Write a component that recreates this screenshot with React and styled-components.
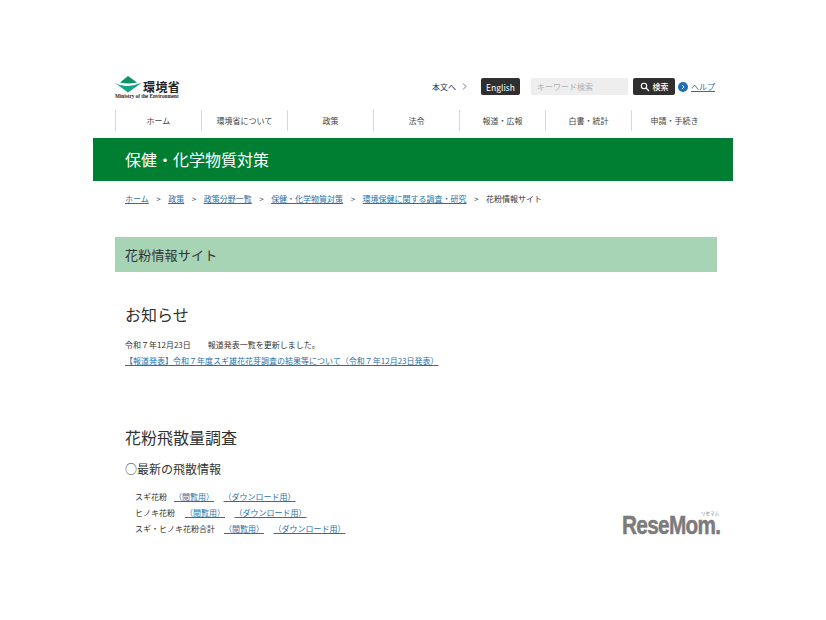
import React from "react";
import styled, { createGlobalStyle } from "styled-components";

const Global = createGlobalStyle`
  html, body { margin: 0; padding: 0; background: #fff; }
  body { font-family: "Noto Sans CJK JP", "Noto Sans", sans-serif; color: #333; }
  a { color: #2a6fa8; }
`;
const Page = styled.div`
  position: relative;
  width: 826px;
  height: 620px;
  overflow: hidden;
  padding: 75px 93px 0;
  box-sizing: border-box;
`;
const Header = styled.header`
  display: flex;
  justify-content: space-between;
  align-items: flex-start;
  padding: 0 18px 0 22px;
  height: 35px;
`;
const Logo = styled.div`
  display: flex;
  flex-direction: column;
  width: 66px;
`;
const LogoTop = styled.div`
  display: flex;
  align-items: center;
  gap: 1px;
  height: 18px;
`;
const LogoName = styled.span`
  font-size: 12px;
  font-weight: 700;
  line-height: 14px;
  letter-spacing: 0.4px;
  color: #222;
  margin-top: 5px;
`;
const LogoEn = styled.span`
  font-family: "Liberation Serif", serif;
  font-size: 5.2px;
  font-weight: 700;
  line-height: 6px;
  white-space: nowrap;
  color: #222;
`;
const Tools = styled.div`
  display: flex;
  align-items: center;
  height: 17px;
  margin-top: 3px;
`;
const SkipLink = styled.span`
  font-size: 8px;
  color: #333;
  display: flex;
  align-items: center;
  gap: 6px;
  margin-right: 14px;
`;
const DarkButton = styled.span`
  display: flex;
  align-items: center;
  justify-content: center;
  gap: 3px;
  height: 17px;
  width: ${(p) => p.$w}px;
  background: #2f2f2f;
  color: #fff;
  border-radius: 2px;
  font-size: ${(p) => p.$fs}px;
  font-weight: ${(p) => p.$fw || 400};
`;
const SearchBox = styled.span`
  display: flex;
  align-items: center;
  width: 97px;
  height: 17px;
  box-sizing: border-box;
  padding-left: 6px;
  margin: 0 5px 0 11px;
  background: #eeeeee;
  color: #b0b0b0;
  font-size: 8px;
`;
const Help = styled.span`
  display: flex;
  align-items: center;
  gap: 3px;
  margin-left: 3px;
  font-size: 8px;
  color: #2a6fa8;
  text-decoration: underline;
`;
const HelpDot = styled.span`
  display: flex;
  width: 10px;
  height: 10px;
  border-radius: 50%;
  background: #1d6fb8;
  align-items: center;
  justify-content: center;
`;
const Nav = styled.nav`
  display: flex;
  margin-left: 22px;
  height: 21px;
`;
const NavItem = styled.span`
  width: 86px;
  display: flex;
  align-items: center;
  justify-content: center;
  font-size: 8px;
  color: #444;
  border-left: 1px solid #d8d8d8;
  box-sizing: border-box;
`;
const GreenBand = styled.div`
  margin-top: 7px;
  height: 43px;
  box-sizing: border-box;
  padding: 0 0 2px 32px;
  background: #007f33;
  color: #fff;
  display: flex;
  align-items: center;
  font-size: 16px;
  font-weight: 400;
`;
const Crumbs = styled.div`
  display: flex;
  align-items: center;
  gap: 7.5px;
  height: 14px;
  margin-top: 10px;
  padding-left: 32px;
  font-size: 8px;
  color: #333;
`;
const Crumb = styled.a`
  text-decoration: underline;
`;
const Main = styled.main`
  padding: 0 16px 0 22px;
`;
const Title = styled.h1`
  margin: 32px 0 0;
  height: 35px;
  background: #a6d4b5;
  display: flex;
  align-items: center;
  padding-left: 10px;
  font-size: 13px;
  font-weight: 400;
  letter-spacing: 0.2px;
  color: #333;
`;
const H2 = styled.h2`
  margin: ${(p) => p.$mt}px 0 0 10px;
  font-size: 16px;
  line-height: 22px;
  font-weight: 400;
  color: #333;
`;
const Notice = styled.p`
  margin: 12px 0 0 10px;
  font-size: 8px;
  line-height: 16px;
  color: #333;
`;
const Gap = styled.span`
  display: inline-block;
  width: 17px;
`;
const NoticeLink = styled.a`
  display: block;
  text-decoration: underline;
  white-space: nowrap;
`;
const H3 = styled.h3`
  margin: 11px 0 0 10px;
  font-size: 12px;
  line-height: 20px;
  font-weight: 400;
  color: #333;
`;
const List = styled.ul`
  list-style: none;
  margin: 10px 0 0 20px;
  padding: 0;
  font-size: 8px;
  line-height: 16px;
  color: #333;
`;
const Row = styled.li`
  display: flex;
  gap: 9.5px;
  white-space: nowrap;
`;
const RowLabel = styled.span`
  margin-right: ${(p) => p.$trim}px;
`;
const RowLink = styled.a`
  text-decoration: underline;
`;
const Mark = styled.div`
  position: absolute;
  left: 622px;
  top: 516px;
  color: #7b7b7b;
  font-family: "Liberation Sans", sans-serif;
  font-weight: 700;
  font-size: 25px;
  line-height: 19px;
  letter-spacing: -0.8px;
  -webkit-text-stroke: 0.5px #7b7b7b;
  transform: scaleX(0.83);
  transform-origin: left;
  white-space: nowrap;
`;
const MarkKana = styled.span`
  position: absolute;
  left: 701px;
  top: 510px;
  color: #7b7b7b;
  font-size: 4.5px;
  line-height: 6px;
`;

const navItems = ["ホーム", "環境省について", "政策", "法令", "報道・広報", "白書・統計", "申請・手続き"];
const rows = [
  ["スギ花粉", -2.5],
  ["ヒノキ花粉", 0.5],
  ["スギ・ヒノキ花粉合計", -0.5],
];

export default function App() {
  return (
    <Page>
      <Global />
      <Header>
        <Logo>
          <LogoTop>
            <svg width="27" height="18" viewBox="0 0 27 18">
              <path d="M13 1 L22 7.5 Q13 9.5 5 7.5 Z" fill="#0a9468" />
              <path d="M0 8 Q6 11.5 13 11 Q20 10.5 27 7.5 Q21 12 13 17.5 Q7 13 0 8 Z" fill="#14a487" />
            </svg>
            <LogoName>環境省</LogoName>
          </LogoTop>
          <LogoEn>Ministry of the Environment</LogoEn>
        </Logo>
        <Tools>
          <SkipLink>
            本文へ
            <svg width="5" height="7" viewBox="0 0 5 7">
              <path d="M1 0.5 L4 3.5 L1 6.5" fill="none" stroke="#555" strokeWidth="0.8" />
            </svg>
          </SkipLink>
          <DarkButton $w={39} $fs={8.5}>English</DarkButton>
          <SearchBox>キーワード検索</SearchBox>
          <DarkButton $w={42} $fs={8} $fw={500}>
            <svg width="10" height="10" viewBox="0 0 10 10">
              <circle cx="4" cy="4" r="2.7" fill="none" stroke="#fff" strokeWidth="1.1" />
              <path d="M6 6 L9 9" stroke="#fff" strokeWidth="1.2" />
            </svg>
            検索
          </DarkButton>
          <Help>
            <HelpDot>
              <svg width="6" height="6" viewBox="0 0 6 6">
                <path d="M2 1 L4 3 L2 5" fill="none" stroke="#fff" strokeWidth="1" />
              </svg>
            </HelpDot>
            ヘルプ
          </Help>
        </Tools>
      </Header>
      <Nav>
        {navItems.map((n) => (
          <NavItem key={n}>{n}</NavItem>
        ))}
      </Nav>
      <GreenBand>保健・化学物質対策</GreenBand>
      <Crumbs>
        <Crumb>ホーム</Crumb>&gt;
        <Crumb>政策</Crumb>&gt;
        <Crumb>政策分野一覧</Crumb>&gt;
        <Crumb>保健・化学物質対策</Crumb>&gt;
        <Crumb>環境保健に関する調査・研究</Crumb>&gt;
        <span>花粉情報サイト</span>
      </Crumbs>
      <Main>
        <Title>花粉情報サイト</Title>
        <H2 $mt={31}>お知らせ</H2>
        <Notice>
          令和７年12月23日<Gap />報道発表一覧を更新しました。
          <NoticeLink>【報道発表】令和７年度スギ雄花花芽調査の結果等について（令和７年12月23日発表）</NoticeLink>
        </Notice>
        <H2 $mt={57}>花粉飛散量調査</H2>
        <H3>○最新の飛散情報</H3>
        <List>
          {rows.map(([label, trim]) => (
            <Row key={label}>
              <RowLabel $trim={trim}>{label}</RowLabel>
              <RowLink>（閲覧用）</RowLink>
              <RowLink>（ダウンロード用）</RowLink>
            </Row>
          ))}
        </List>
      </Main>
      <Mark>ReseMom.</Mark>
      <MarkKana>リセマム</MarkKana>
    </Page>
  );
}
